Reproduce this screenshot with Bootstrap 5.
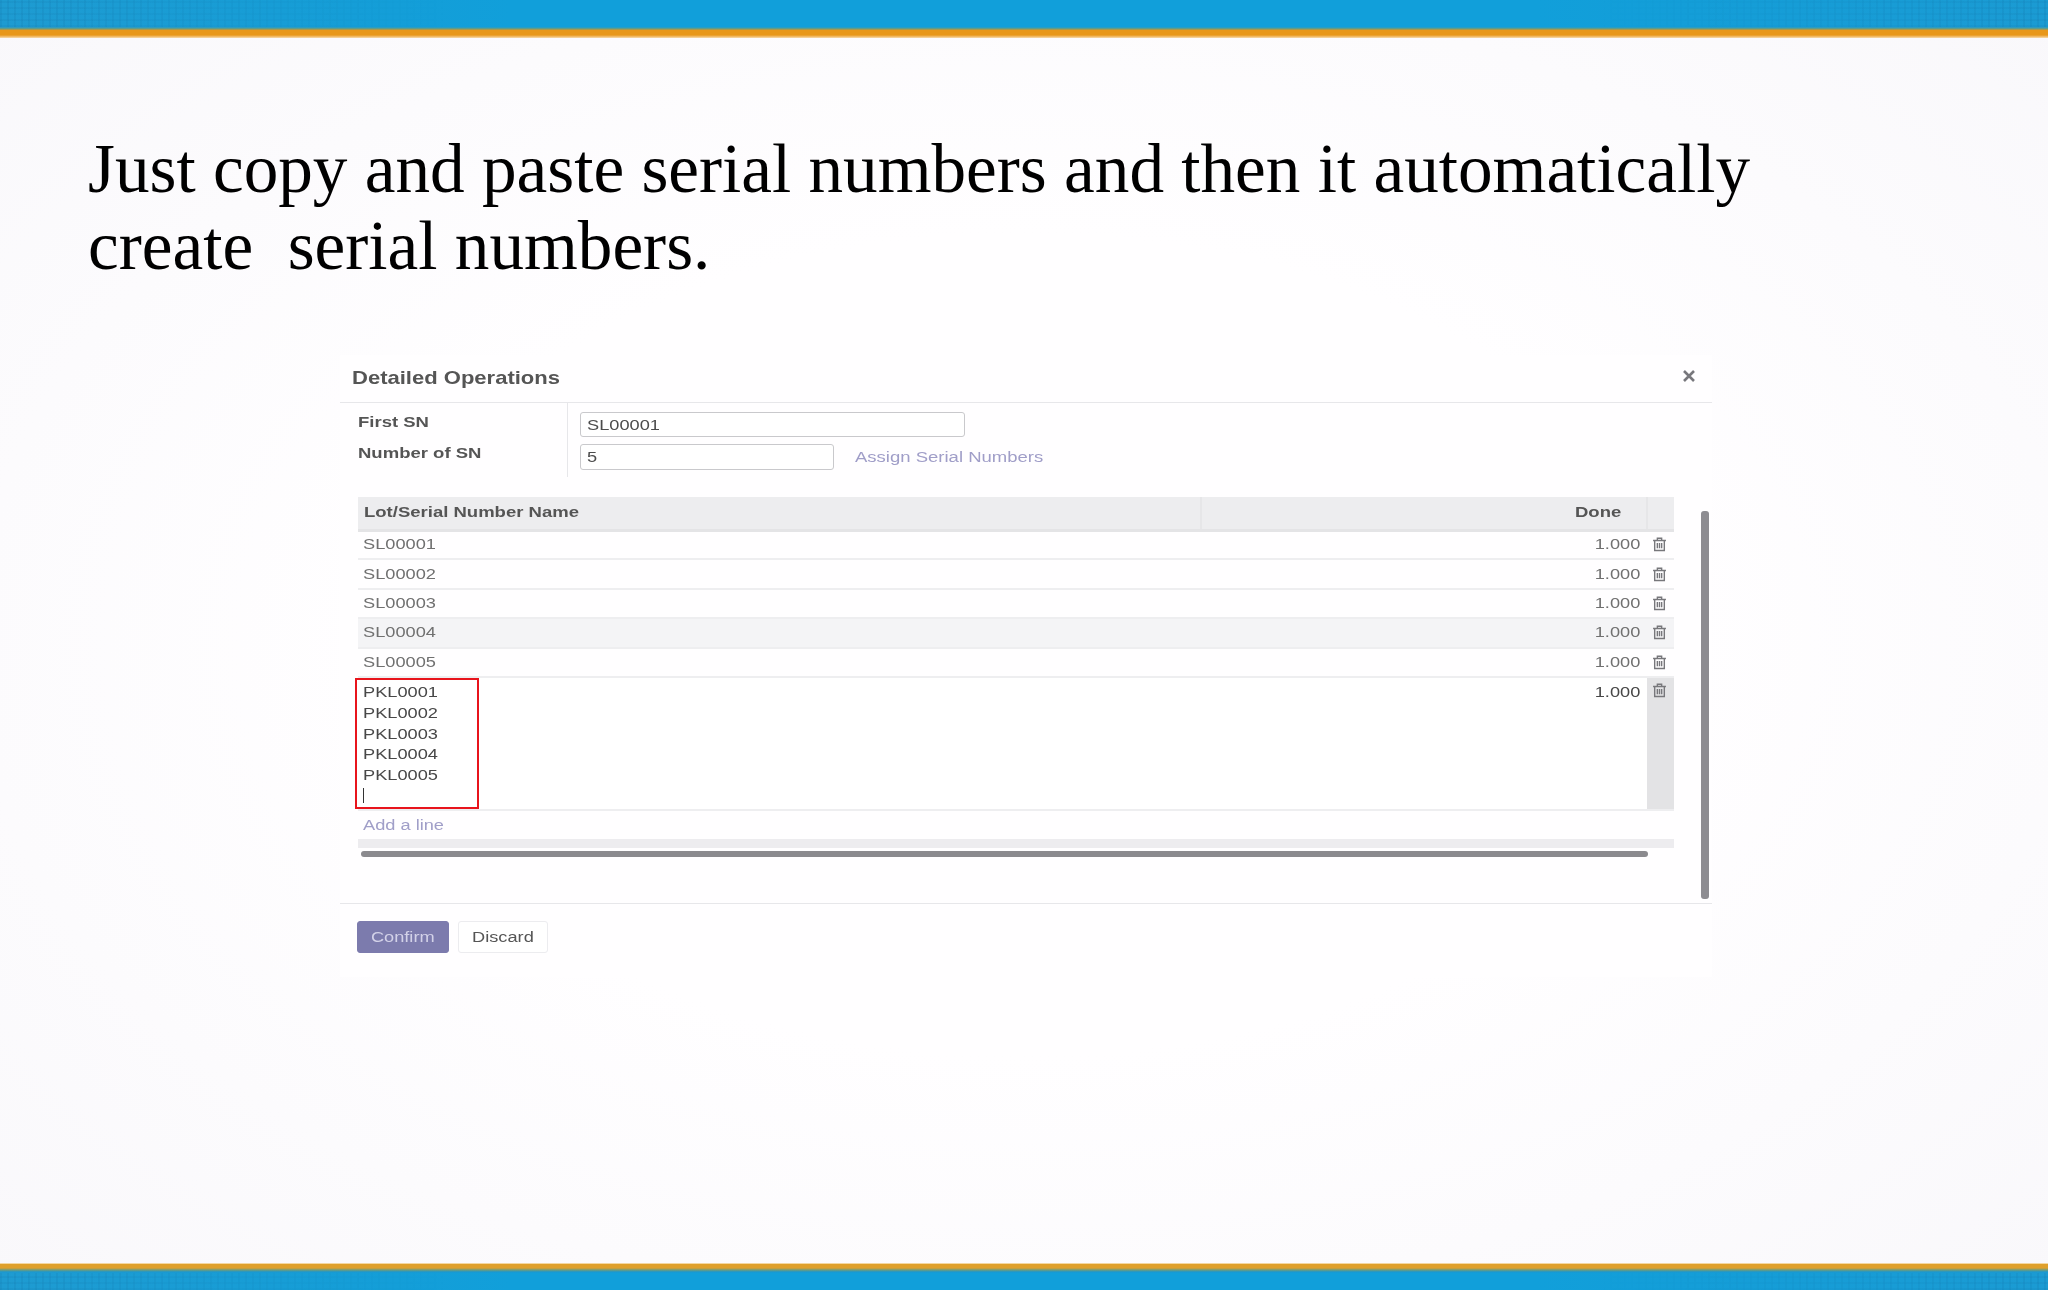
<!DOCTYPE html>
<html lang="en">
<head>
<meta charset="utf-8">
<title>Detailed Operations</title>
<link href="https://cdn.jsdelivr.net/npm/bootstrap@5.3.0/dist/css/bootstrap.min.css" rel="stylesheet">
<style>
html,body{height:100%}
body{width:2048px;height:1290px;overflow:hidden;font-family:"Liberation Sans",Arial,sans-serif;background:radial-gradient(ellipse at center,#fffeff 45%,#f9f8fb 100%);}
.band-top{height:38px;background:linear-gradient(180deg,transparent 0 27px,#5f9c8c 28.5px,#e8971a 30.5px,#e8971a 35px,#f5cf95 37.5px,#fff 38px),linear-gradient(90deg,#1e9bd1,#119fda 25%,#119fda 75%,#1b9bd3);}
.band-bottom{height:27px;background:linear-gradient(180deg,#fff3dc 0,#dfa02c 1.5px,#dfa02c 5px,#6f9c7c 7px,#1a97cf 9px,transparent 10px),linear-gradient(90deg,#1e9bd1,#119fda 25%,#119fda 75%,#1b9bd3);}
.weave{height:100%;background-image:repeating-linear-gradient(90deg,rgba(10,80,130,.09) 0 2px,transparent 2px 7px),repeating-linear-gradient(0deg,rgba(10,80,130,.07) 0 2px,transparent 2px 6px);-webkit-mask-image:linear-gradient(90deg,#000 0,transparent 22%,transparent 78%,#000 100%);mask-image:linear-gradient(90deg,#000 0,transparent 22%,transparent 78%,#000 100%);}
.band-top .weave{height:27px;}
.band-bottom .weave{margin-top:10px;height:17px;}
.headline{font-family:"Liberation Serif","Times New Roman",serif;font-size:69.2px;line-height:77px;color:#000;margin:0;padding:92px 0 0 88px;font-weight:400;}
.dlg{width:1372px;height:622px;margin:71px 0 0 340px;background:#fffeff;color:#555;font-size:15.3px;}
.tx{display:inline-block;transform:scaleX(1.19);transform-origin:left center;line-height:1.2;white-space:nowrap;}
.tx-b{transform:scaleX(1.21);}
.tx-r{transform-origin:right center;}
.tx-c{transform-origin:center;}
.dlg-head{height:48px;border-bottom:1px solid #e7e7ea;padding:0 12px;}
.dlg-title{font-size:18.5px;font-weight:700;margin:0;color:#555;}
.dlg-x{width:14px;height:14px;margin:-6px 4px 0 0;}
.dlg-main{height:500px;}
.dlg-left{width:1334px;}
.fields{padding-left:18px;height:74px;}
.labels{width:210px;border-right:1px solid #e7e7ea;font-weight:700;padding-top:10px;}
.labels>div{height:31px;line-height:18px;}
.vals{padding:9px 0 0 12px;}
.inp{height:25px;border:1px solid #c9c9cc;border-radius:3px;background:#fff;color:#4c4c4c;padding-left:6px;line-height:23px;}
.inp-a{width:385px;margin-bottom:7px;}
.inp-b{width:254px;height:26px;}
.lnk{color:#a09ec8;}
.assign{margin-left:21px;}
.grid-wrap{margin:20px 0 0 18px;width:1316px;}
.ops{table-layout:fixed;width:1316px;margin:0;color:#707070;--bs-table-bg:transparent;border-collapse:collapse;}
.ops th,.ops td{padding:0;border:0;vertical-align:middle;}
.ops thead th{height:33px;background:#ededef;border-bottom:3px solid #e4e4e6;font-weight:700;color:#555;padding-bottom:1px;}
.ops thead th+th{border-left:2px solid #e6e6e8;}
.ops thead .c-name{padding-left:6px;}
.ops tbody td{height:29.4px;border-bottom:2px solid #eeeef0;}
.ops .c-name{padding-left:5px;}
.ops .c-qty{text-align:right;padding-right:7px;}
.ops .c-done{text-align:right;padding-right:25px;}
.ico{display:block;margin:0 0 0 5px;width:15px;height:15px;}
.shade td{background:#f4f4f6;}
.editing td{height:132px;vertical-align:top;background:#fff;color:#474747;}
.editing .c-qty{padding-top:3px;}
.editing .c-bin{background:#e3e3e5;padding-top:5px;}
.redbox{width:124px;height:131px;margin:0 0 0 -3px;border:2.5px solid #e8141c;padding:2px 0 0 6px;}
.redbox>div{height:20.8px;line-height:20.8px;}
.caret-line{display:block;width:1px;height:15px;background:#333;margin-top:2px;}
.addrow{height:28px;padding-left:5px;line-height:28px;}
.addrow .tx{line-height:28px;}
.tfootbar{height:9px;background:#edecef;}
.hbar{height:6px;width:1287px;margin:3px 0 0 3px;border-radius:3px;background:#8b8a8e;}
.vbar{width:8px;height:388px;margin:108px 3px 0 0;border-radius:3px;background:#8d8c91;}
.dlg-foot{height:74px;border-top:1px solid #e7e7ea;padding:17px 0 0 17px;gap:9px;}
.act{height:32px;padding:0;border-radius:3px;font-size:15.3px;line-height:30px;}
.act-main{width:92px;background:#7c7bad;border:1px solid #7c7bad;color:#d3d2e8;}
.act-alt{width:90px;background:#fff;border:1px solid #ececef;color:#555;}
</style>
</head>
<body class="d-flex flex-column">
<div class="band-top"><div class="weave"></div></div>
<h1 class="headline">Just copy and paste serial numbers and then it automatically<br>create&nbsp; serial numbers.</h1>
<section class="dlg d-flex flex-column">
  <header class="dlg-head d-flex align-items-center justify-content-between">
    <h2 class="dlg-title"><span class="tx">Detailed Operations</span></h2>
    <svg class="dlg-x" viewBox="0 0 14 14"><path d="M2 2 12 12M12 2 2 12" stroke="#77777c" stroke-width="2.6" fill="none"/></svg>
  </header>
  <div class="dlg-main d-flex justify-content-between">
    <div class="dlg-left">
      <div class="fields d-flex">
        <div class="labels">
          <div><span class="tx tx-b">First SN</span></div>
          <div><span class="tx tx-b">Number of SN</span></div>
        </div>
        <div class="vals">
          <div class="inp inp-a"><span class="tx">SL00001</span></div>
          <div class="d-flex align-items-center">
            <div class="inp inp-b"><span class="tx">5</span></div>
            <a class="lnk assign text-decoration-none" href="#"><span class="tx tx-b">Assign Serial Numbers</span></a>
          </div>
        </div>
      </div>
      <div class="grid-wrap">
        <table class="table ops">
          <colgroup><col style="width:843px"><col style="width:446px"><col style="width:27px"></colgroup>
          <thead><tr><th class="c-name"><span class="tx tx-b">Lot/Serial Number Name</span></th><th class="c-done"><span class="tx tx-b tx-r">Done</span></th><th></th></tr></thead>
          <tbody>
            <tr><td class="c-name"><span class="tx">SL00001</span></td><td class="c-qty"><span class="tx tx-r">1.000</span></td><td class="c-bin"><svg class="ico" viewBox="0 0 14 14"><use href="#bin"/></svg></td></tr>
            <tr><td class="c-name"><span class="tx">SL00002</span></td><td class="c-qty"><span class="tx tx-r">1.000</span></td><td class="c-bin"><svg class="ico" viewBox="0 0 14 14"><use href="#bin"/></svg></td></tr>
            <tr><td class="c-name"><span class="tx">SL00003</span></td><td class="c-qty"><span class="tx tx-r">1.000</span></td><td class="c-bin"><svg class="ico" viewBox="0 0 14 14"><use href="#bin"/></svg></td></tr>
            <tr class="shade"><td class="c-name"><span class="tx">SL00004</span></td><td class="c-qty"><span class="tx tx-r">1.000</span></td><td class="c-bin"><svg class="ico" viewBox="0 0 14 14"><use href="#bin"/></svg></td></tr>
            <tr><td class="c-name"><span class="tx">SL00005</span></td><td class="c-qty"><span class="tx tx-r">1.000</span></td><td class="c-bin"><svg class="ico" viewBox="0 0 14 14"><use href="#bin"/></svg></td></tr>
            <tr class="editing"><td class="p-0"><div class="redbox"><div><span class="tx">PKL0001</span></div><div><span class="tx">PKL0002</span></div><div><span class="tx">PKL0003</span></div><div><span class="tx">PKL0004</span></div><div><span class="tx">PKL0005</span></div><span class="caret-line"></span></div></td><td class="c-qty"><span class="tx tx-r">1.000</span></td><td class="c-bin"><svg class="ico" viewBox="0 0 14 14"><use href="#bin"/></svg></td></tr>
          </tbody>
        </table>
        <div class="addrow"><a class="lnk text-decoration-none" href="#"><span class="tx">Add a line</span></a></div>
        <div class="tfootbar"></div>
        <div class="hbar"></div>
      </div>
    </div>
    <div class="vbar"></div>
  </div>
  <footer class="dlg-foot d-flex">
    <button type="button" class="btn act act-main"><span class="tx tx-c">Confirm</span></button>
    <button type="button" class="btn act act-alt"><span class="tx tx-c">Discard</span></button>
  </footer>
</section>
<div class="band-bottom mt-auto"><div class="weave"></div></div>
<svg width="0" height="0" class="d-none"><defs><g id="bin" fill="none" stroke="#77777b" stroke-width="1.3"><path d="M1 3.2H13M5 3V1.2H9V3M2.5 3.2V12.6H11.5V3.2"/><path d="M5 5.5V10.6M7 5.5V10.6M9 5.5V10.6"/></g></defs></svg>
<script src="https://cdn.jsdelivr.net/npm/bootstrap@5.3.0/dist/js/bootstrap.bundle.min.js"></script>
</body>
</html>
